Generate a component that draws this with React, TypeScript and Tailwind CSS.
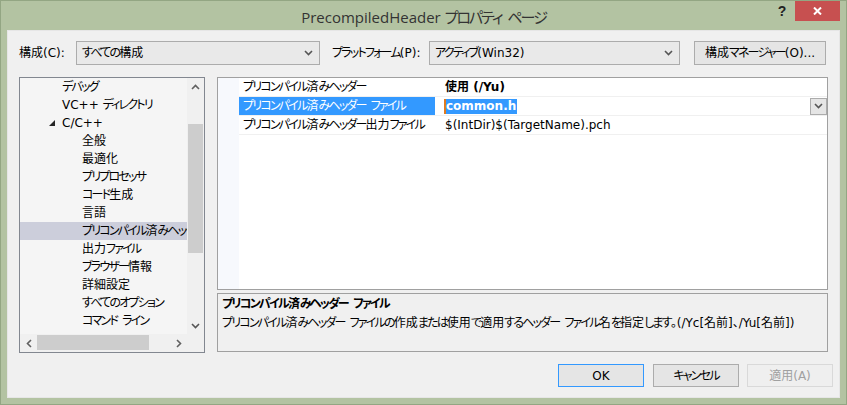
import React from "react";

const F = "font-['DejaVu_Sans','Noto_Sans_CJK_JP',sans-serif] [font-feature-settings:'palt']";

const KANA = /([\u3040-\u30ff\u31f0-\u31ff][\u3040-\u30ff\u31f0-\u31ff ]*)/;
const KANA_START = /^[\u3040-\u30ff\u31f0-\u31ff]/;

function J({ children, t = "n" }: { children: string; t?: "n" | "title" }) {
  const parts = children.split(KANA);
  const cls = t === "title" ? "tracking-[-2px] [word-spacing:4px]" : "tracking-[-1.8px] [word-spacing:3px]";
  return (
    <>
      {parts.map((p, i) =>
        KANA_START.test(p) ? (
          <span key={i} className={cls}>
            {p}
          </span>
        ) : (
          <React.Fragment key={i}>{p}</React.Fragment>
        )
      )}
    </>
  );
}

function Chevron({ className = "" }: { className?: string }) {
  return (
    <svg width="9" height="6" viewBox="0 0 9 6" className={className}>
      <path d="M1 1 L4.5 4.5 L8 1" fill="none" stroke="#555" strokeWidth="1.6" />
    </svg>
  );
}

function Combo({ w, text }: { w: string; text: string }) {
  return (
    <div className={`${w} shrink-0 h-[24px] border border-[#acacac] bg-[#e9e9e9] flex items-center justify-between pl-[5px] pr-[6px]`}>
      <span className="text-[12px] text-black whitespace-nowrap">
        <J>{text}</J>
      </span>
      <Chevron />
    </div>
  );
}

const treeItems: { t: string; lvl: number; sel?: boolean; open?: boolean }[] = [
  { t: "デバッグ", lvl: 1 },
  { t: "VC++ ディレクトリ", lvl: 1 },
  { t: "C/C++", lvl: 1, open: true },
  { t: "全般", lvl: 2 },
  { t: "最適化", lvl: 2 },
  { t: "プリプロセッサ", lvl: 2 },
  { t: "コード生成", lvl: 2 },
  { t: "言語", lvl: 2 },
  { t: "プリコンパイル済みヘッダー", lvl: 2, sel: true },
  { t: "出力ファイル", lvl: 2 },
  { t: "ブラウザー情報", lvl: 2 },
  { t: "詳細設定", lvl: 2 },
  { t: "すべてのオプション", lvl: 2 },
  { t: "コマンド ライン", lvl: 2 },
];

export default function App() {
  return (
    <div className={`${F} w-[847px] h-[405px] bg-[#b3c3a2] border border-[#93a683] flex flex-col relative overflow-hidden`}>
      {/* title bar */}
      <div className="h-[29px] flex items-center justify-center shrink-0">
        <span className="text-[15px] text-[#333] mt-[4px] whitespace-nowrap font-['Open_Sans','Noto_Sans_CJK_JP',sans-serif]">
          <J t="title">PrecompiledHeader プロパティ ページ</J>
        </span>
      </div>
      <div className="absolute top-0 right-[6px] flex items-start">
        <div className="w-[26px] h-[20px] flex items-center justify-center text-[14px] font-bold text-[#222] font-['Liberation_Sans',sans-serif]">?</div>
        <div className="w-[45px] h-[20px] bg-[#c75050] flex items-center justify-center">
          <svg width="9" height="8" viewBox="0 0 9 8">
            <path d="M1 0.5 L8 7.5 M8 0.5 L1 7.5" stroke="#fff" strokeWidth="2" />
          </svg>
        </div>
      </div>

      {/* client */}
      <div className="mx-[6px] mb-[6px] flex-1 bg-[#f0f0f0] border border-[#e6e6e6] flex flex-col">
        {/* top row */}
        <div className="flex items-center mt-[10px] h-[24px] pl-[11px] text-[12px] text-black whitespace-nowrap">
          <span className="w-[57px] shrink-0">
            <J>構成(C):</J>
          </span>
          <Combo w="w-[244px]" text="すべての構成" />
          <span className="ml-[12px] w-[97px] shrink-0">
            <J>プラットフォーム(P):</J>
          </span>
          <Combo w="w-[251px]" text="アクティブ(Win32)" />
          <div className="ml-[14px] w-[132px] h-[24px] border border-[#acacac] bg-[#e5e5e5] flex items-center justify-center">
            <J>構成マネージャー(O)...</J>
          </div>
        </div>

        {/* main */}
        <div className="flex mt-[12px] ml-[11px] h-[276px]">
          {/* tree */}
          <div className="w-[186px] h-[276px] border border-[#828790] bg-[#f5f5f5] flex flex-col">
            <div className="flex flex-1 min-h-0">
              <div className="flex-1 overflow-hidden min-w-0">
                {treeItems.map((it, i) => (
                  <div key={i} className={`h-[18px] flex items-center text-[12px] text-black whitespace-nowrap overflow-hidden ${it.sel ? "bg-[#cccedb]" : ""}`}>
                    <span className={it.lvl === 1 ? "shrink-0 w-[42px] flex justify-end pr-[7px]" : "shrink-0 w-[62px]"}>
                      {it.open ? (
                        <svg width="6" height="6" viewBox="0 0 6 6">
                          <path d="M6 0 L6 6 L0 6 Z" fill="#262626" />
                        </svg>
                      ) : null}
                    </span>
                    <span className="shrink-0">
                      <J>{it.t}</J>
                    </span>
                  </div>
                ))}
              </div>
              {/* vscroll */}
              <div className="w-[17px] shrink-0 bg-[#f0f0f0] flex flex-col items-center">
                <div className="h-[17px] flex items-center justify-center">
                  <svg width="9" height="6" viewBox="0 0 9 6">
                    <path d="M1 5 L4.5 1.5 L8 5" fill="none" stroke="#606060" strokeWidth="1.6" />
                  </svg>
                </div>
                <div className="w-[15px] h-[129px] mt-[29px] bg-[#cdcdcd]" />
                <div className="flex-1" />
                <div className="h-[17px] flex items-center justify-center">
                  <Chevron />
                </div>
              </div>
            </div>
            {/* hscroll */}
            <div className="h-[18px] flex bg-[#f0f0f0] shrink-0">
              <div className="w-[17px] flex items-center justify-center">
                <svg width="6" height="9" viewBox="0 0 6 9">
                  <path d="M5 1 L1.5 4.5 L5 8" fill="none" stroke="#606060" strokeWidth="1.6" />
                </svg>
              </div>
              <div className="w-[112px] h-[15px] mt-[1px] bg-[#cdcdcd]" />
              <div className="flex-1" />
              <div className="w-[17px] flex items-center justify-center">
                <svg width="6" height="9" viewBox="0 0 6 9">
                  <path d="M1 1 L4.5 4.5 L1 8" fill="none" stroke="#606060" strokeWidth="1.6" />
                </svg>
              </div>
              <div className="w-[17px] bg-[#f0f0f0]" />
            </div>
          </div>

          {/* right side */}
          <div className="ml-[12px] w-[611px] flex flex-col">
            <div className="h-[213px] border border-[#a0a0a0] bg-white flex">
              <div className="w-[21px] bg-[#f7f9fd]" />
              <div className="flex-1 flex flex-col text-[12px] whitespace-nowrap">
                <div className="h-[19px] flex items-center border-b border-[#f0f0f0]">
                  <div className="w-[202px] pl-[4px] text-black">
                    <J>プリコンパイル済みヘッダー</J>
                  </div>
                  <div className="pl-[4px] font-bold text-black">使用 (/Yu)</div>
                </div>
                <div className="h-[19px] flex items-center border-b border-[#f0f0f0]">
                  <div className="w-[196px] h-full pl-[4px] bg-[#3399ff] text-white flex items-center">
                    <J>プリコンパイル済みヘッダー ファイル</J>
                  </div>
                  <div className="w-[6px]" />
                  <div className="flex-1 flex items-center pl-[3px]">
                    <span className="w-[2px] h-[15px] bg-[#e07b1f]" />
                    <span className="bg-[#3399ff] text-white font-bold pr-[1px] leading-[15px]">common.h</span>
                  </div>
                  <div className="w-[17px] h-[17px] border border-[#acacac] bg-[#e5e5e5] flex items-center justify-center">
                    <Chevron />
                  </div>
                </div>
                <div className="h-[19px] flex items-center border-b border-[#f0f0f0]">
                  <div className="w-[202px] pl-[4px] text-black">
                    <J>プリコンパイル済みヘッダー出力ファイル</J>
                  </div>
                  <div className="pl-[4px] text-black">$(IntDir)$(TargetName).pch</div>
                </div>
              </div>
            </div>
            <div className="mt-[3px] h-[59px] border border-[#a0a0a0] bg-[#f0f0f0] px-[4px] pt-[1px] text-[12px] text-black whitespace-nowrap">
              <div className="font-bold leading-[18px]">
                <J>プリコンパイル済みヘッダー ファイル</J>
              </div>
              <div className="leading-[18px] mt-[1px]">
                <J>プリコンパイル済みヘッダー ファイルの作成または使用で適用するヘッダー ファイル名を指定します</J>
                <span>。(/Yc[名前]、/Yu[名前])</span>
              </div>
            </div>
          </div>
        </div>

        {/* buttons */}
        <div className="flex justify-end mt-[11px] pr-[6px] text-[12px]">
          <div className="w-[86px] h-[23px] border border-[#3399ff] bg-[#e5e5e5] flex items-center justify-center text-black">OK</div>
          <div className="ml-[9px] w-[86px] h-[23px] border border-[#acacac] bg-[#e5e5e5] flex items-center justify-center text-black">
            <J>キャンセル</J>
          </div>
          <div className="ml-[8px] w-[86px] h-[23px] border border-[#d9d9d9] bg-[#efefef] flex items-center justify-center text-[#a0a0a0]">
            <J>適用(A)</J>
          </div>
        </div>
      </div>
    </div>
  );
}
